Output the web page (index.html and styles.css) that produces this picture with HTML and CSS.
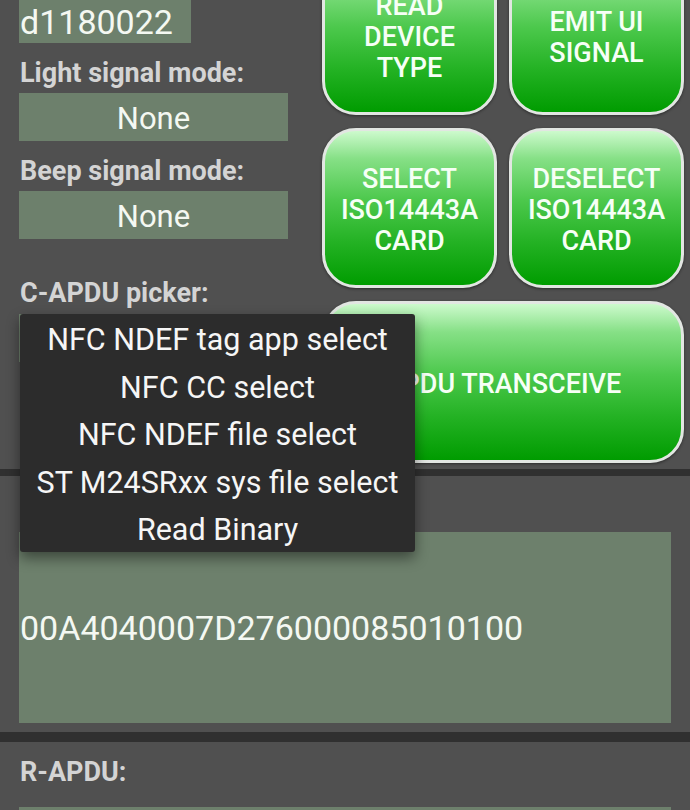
FILE: index.html
```html
<!DOCTYPE html>
<html>
<head>
<meta charset="utf-8">
<link rel="stylesheet" href="styles.css">
</head>
<body>
<div class="screen">
  <section class="top">
    <div class="left">
      <div class="id-box">d1180022</div>
      <div class="label">Light signal mode:</div>
      <div class="value">None</div>
      <div class="label">Beep signal mode:</div>
      <div class="value">None</div>
      <div class="label label-gap">C-APDU picker:</div>
      <div class="spinner"></div>
    </div>
    <div class="buttons">
      <div class="btn">READ<br>DEVICE<br>TYPE</div>
      <div class="btn">EMIT UI<br>SIGNAL</div>
      <div class="btn">SELECT<br>ISO14443A<br>CARD</div>
      <div class="btn">DESELECT<br>ISO14443A<br>CARD</div>
      <div class="btn btn-wide">APDU TRANSCEIVE</div>
    </div>
  </section>
  <div class="band band-thin"></div>
  <section class="panel">
    <div class="label-space"></div>
    <div class="apdu-box">00A4040007D276000085010100</div>
  </section>
  <div class="band band-thick"></div>
  <section class="panel">
    <div class="label">R-APDU:</div>
    <div class="rapdu-box"></div>
  </section>

  <div class="dropdown">
    <div class="item">NFC NDEF tag app select</div>
    <div class="item">NFC CC select</div>
    <div class="item">NFC NDEF file select</div>
    <div class="item">ST M24SRxx sys file select</div>
    <div class="item">Read Binary</div>
  </div>
</div>
</body>
</html>
```

FILE: styles.css
```css
html, body {
  margin: 0;
  padding: 0;
  background: #505050;
  overflow: hidden;
}

.screen {
  position: relative;
  width: 690px;
  height: 810px;
  overflow: hidden;
  font-family: Roboto, "Liberation Sans", sans-serif;
}

.top {
  display: flex;
  gap: 34px;
  margin-top: -45px;
  padding: 0 6px 6px 19px;
}

.left {
  width: 269px;
  display: flex;
  flex-direction: column;
}

.id-box {
  margin-top: 40px;
  width: 172px;
  height: 48px;
  box-sizing: border-box;
  padding: 6px 0 0 1px;
  line-height: 42px;
  font-size: 34px;
  color: #f4f8f2;
  background: #6d806c;
}

.label {
  height: 50px;
  box-sizing: border-box;
  padding-top: 10px;
  padding-left: 1px;
  line-height: 40px;
  font-size: 27px;
  font-weight: 700;
  color: #d4d4d4;
}

.label-gap {
  margin-top: 24px;
}

.label-space {
  height: 50px;
}

.value {
  height: 48px;
  box-sizing: border-box;
  padding-top: 4px;
  line-height: 44px;
  text-align: center;
  font-size: 31px;
  color: #f4f8f2;
  background: #6d806c;
}

.spinner {
  height: 48px;
  margin-top: 1px;
  background: #6d806c;
}

.buttons {
  display: grid;
  grid-template-columns: 175px 175px;
  grid-template-rows: 160px 160px 162px;
  column-gap: 12px;
  row-gap: 13px;
}

.btn {
  display: flex;
  align-items: center;
  justify-content: center;
  text-align: center;
  box-sizing: border-box;
  padding-top: 5px;
  border: 3px solid #e2e6e2;
  border-radius: 34px;
  background: linear-gradient(to bottom, #cdfacd 0%, #86e086 18%, #4cc84c 45%, #24b224 72%, #009c00 100%);
  box-shadow: 0 1px 3px rgba(0, 0, 0, 0.45);
  color: #f6fff6;
  font-size: 27px;
  font-weight: 500;
  line-height: 31px;
}

.btn-wide {
  grid-column: 1 / span 2;
}

.band {
  background: #303030;
}

.band-thin {
  height: 7px;
}

.band-thick {
  height: 10px;
}

.panel {
  display: flex;
  flex-direction: column;
  padding: 0 19px 9px 19px;
}

.apdu-box {
  margin-top: 6px;
  height: 191px;
  display: flex;
  align-items: center;
  padding-left: 1px;
  font-size: 34px;
  color: #f4f8f2;
  background: #6d806c;
}

.rapdu-box {
  margin-top: 15px;
  height: 60px;
  background: #6d806c;
}

.dropdown {
  position: absolute;
  left: 20px;
  top: 314px;
  width: 395px;
  height: 238px;
  box-sizing: border-box;
  padding-top: 2px;
  background: #2c2c2c;
  border-radius: 3px;
  box-shadow: 0 6px 14px rgba(0, 0, 0, 0.45);
}

.item {
  height: 47.5px;
  line-height: 47.5px;
  text-align: center;
  font-size: 30.5px;
  color: #f6f6f6;
}
```
